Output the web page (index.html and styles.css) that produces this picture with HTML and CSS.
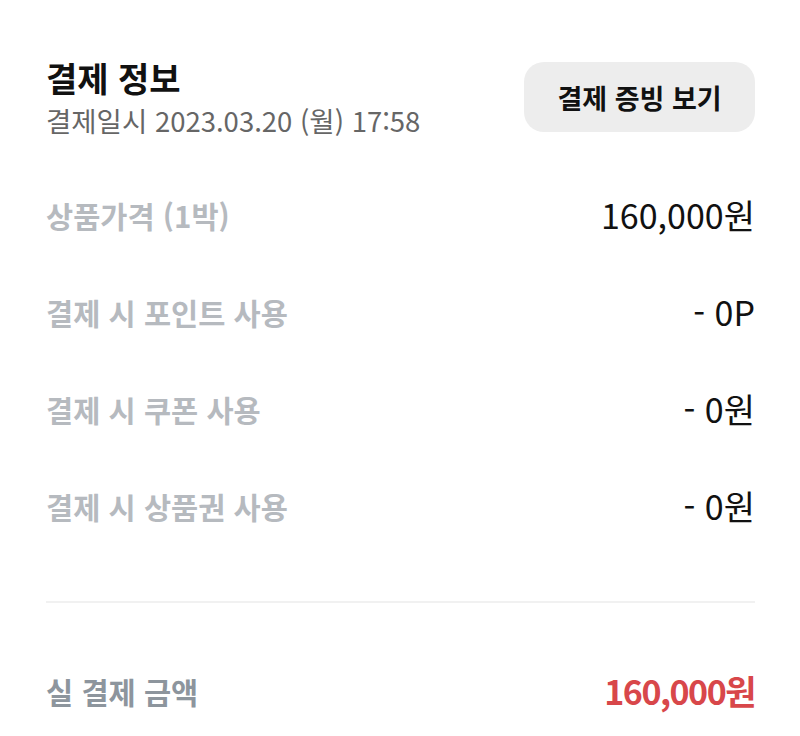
FILE: index.html
```html
<!DOCTYPE html>
<html lang="ko">
<head>
    <meta charset="UTF-8">
    <meta name="viewport" content="width=device-width, initial-scale=1.0">
    <title>결제 정보</title>
    <link rel="stylesheet" href="styles.css">
</head>
<body>
    <main class="payment">
        <div class="header">
            <div class="heading">
                <h1 class="title">결제 정보</h1>
                <div class="date">결제일시 2023.03.20 (월) 17:58</div>
            </div>
            <button class="receipt">결제 증빙 보기</button>
        </div>

        <ul class="items">
            <li class="row">
                <span class="label">상품가격 (1박)</span>
                <span class="value">160,000원</span>
            </li>
            <li class="row">
                <span class="label">결제 시 포인트 사용</span>
                <span class="value">- 0P</span>
            </li>
            <li class="row">
                <span class="label">결제 시 쿠폰 사용</span>
                <span class="value">- 0원</span>
            </li>
            <li class="row">
                <span class="label">결제 시 상품권 사용</span>
                <span class="value">- 0원</span>
            </li>
        </ul>

        <div class="divider"></div>

        <div class="row total">
            <span class="label">실 결제 금액</span>
            <span class="value">160,000원</span>
        </div>
    </main>
</body>
</html>
```

FILE: styles.css
```css
*{
    margin: 0;
    padding: 0;
    box-sizing: border-box;
}
body{
    background-color: #fff;
    font-family: "Noto Sans CJK KR", "Noto Sans", sans-serif;
    color: #111;
}
.payment{
    padding: 56px 45px 0 46px;
}
.header{
    display: flex;
    align-items: center;
    justify-content: space-between;
}
.title{
    font-size: 34px;
    font-weight: 700;
    line-height: 44px;
    color: #111;
}
.date{
    margin-top: 2px;
    font-size: 27.5px;
    line-height: 36px;
    color: #666;
}
.receipt{
    width: 231px;
    height: 70px;
    border: none;
    border-radius: 20px;
    background-color: #ededed;
    font-family: inherit;
    font-size: 27px;
    font-weight: 700;
    color: #111;
}
.items{
    list-style: none;
    margin-top: 28px;
}
.row{
    height: 97px;
    display: flex;
    align-items: center;
    justify-content: space-between;
}
.label{
    font-size: 29.5px;
    font-weight: 700;
    color: #b6babf;
}
.value{
    font-size: 34px;
    color: #111;
}
.divider{
    height: 2px;
    background-color: #f1f1f1;
    margin-top: 47px;
}
.total{
    margin-top: 39px;
}
.total .label{
    color: #8d959d;
}
.total .value{
    font-weight: 700;
    color: #d8474a;
    letter-spacing: -1.5px;
}
```
